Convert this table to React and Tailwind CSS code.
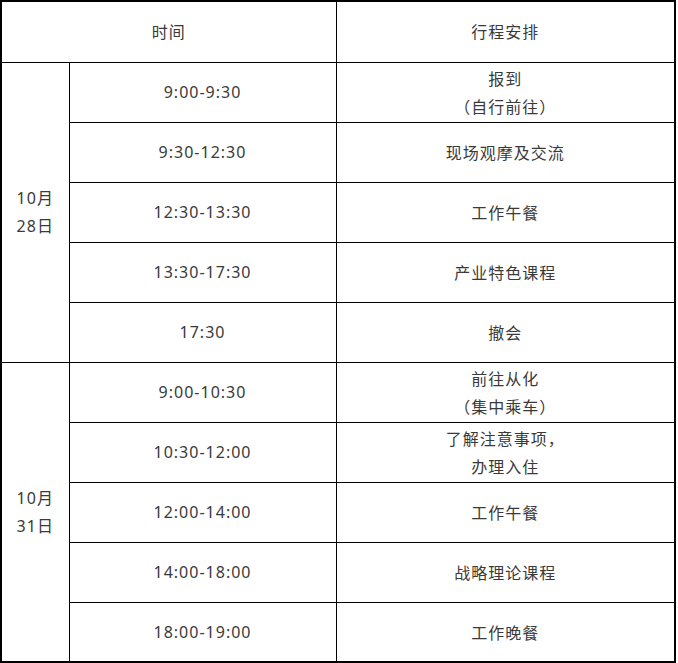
export default function App() {
  const day1 = [
    ["9:00-9:30", ["报到", "（自行前往）"]],
    ["9:30-12:30", ["现场观摩及交流"]],
    ["12:30-13:30", ["工作午餐"]],
    ["13:30-17:30", ["产业特色课程"]],
    ["17:30", ["撤会"]],
  ];
  const day2 = [
    ["9:00-10:30", ["前往从化", "（集中乘车）"]],
    ["10:30-12:00", ["了解注意事项，", "办理入住"]],
    ["12:00-14:00", ["工作午餐"]],
    ["14:00-18:00", ["战略理论课程"]],
    ["18:00-19:00", ["工作晚餐"]],
  ];
  const cell = "border border-black text-center align-middle p-0";
  const cjk = { fontFamily: '"Noto Sans CJK SC", sans-serif' };
  const renderDay = (rows, date) =>
    rows.map(([t, items], i) => (
      <tr key={date + i} className="h-[60px]">
        {i === 0 && (
          <td rowSpan={rows.length} className={cell}>
            <div>10月</div>
            <div>{date}</div>
          </td>
        )}
        <td className={cell}>{t}</td>
        <td className={cell} style={cjk}>
          {items.map((s, k) => (
            <div key={k}>{s}</div>
          ))}
        </td>
      </tr>
    ));
  return (
    <div className="bg-white w-[678px] h-[663px] overflow-hidden">
      <table
        className="w-[676px] table-fixed border-collapse border-2 border-black text-[16px] leading-[28px] tracking-[1px] text-[#3a3a3a]"
        style={{ fontFamily: '"Noto Sans", "Noto Sans CJK SC", sans-serif' }}
      >
        <colgroup>
          <col className="w-[68px]" />
          <col className="w-[267px]" />
          <col />
        </colgroup>
        <tbody>
          <tr className="h-[61px]">
            <td colSpan={2} className={cell}>时间</td>
            <td className={cell}>行程安排</td>
          </tr>
          {renderDay(day1, "28日")}
          {renderDay(day2, "31日")}
        </tbody>
      </table>
    </div>
  );
}
